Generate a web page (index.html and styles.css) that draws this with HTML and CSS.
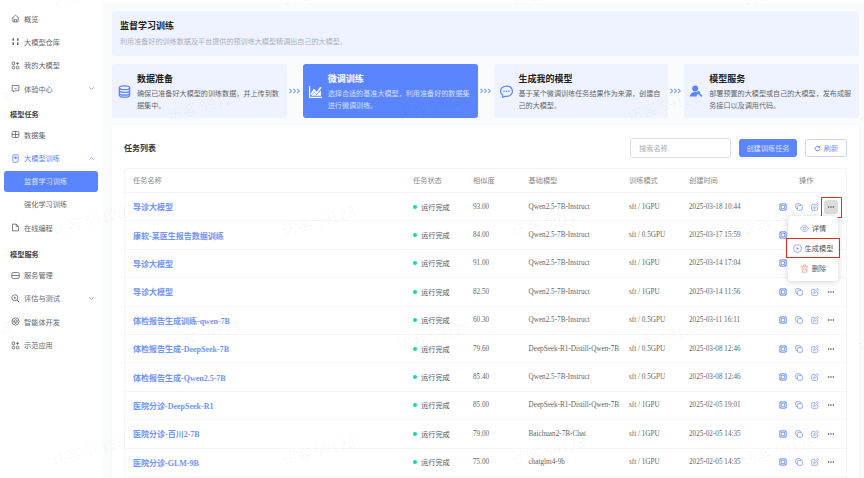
FILE: index.html
```html
<!DOCTYPE html>
<html lang="zh-CN">
<head>
    <meta charset="UTF-8">
    <meta name="viewport" content="width=device-width, initial-scale=1.0">
    <title>监督学习训练</title>
    <link rel="stylesheet" href="styles.css">
</head>
<body>
    <svg class="sprite" xmlns="http://www.w3.org/2000/svg">
        <symbol id="i-scan" viewBox="0 0 24 24">
            <rect x="2" y="2" width="20" height="20" rx="3" fill="currentColor" fill-opacity=".3" stroke="currentColor" stroke-width="2.4"/>
            <path d="M3 3l5 5M21 3l-5 5M3 21l5-5M21 21l-5-5" fill="none" stroke="currentColor" stroke-width="2.4"/>
            <rect x="7.500" y="7.500" width="9" height="9" fill="#fff" stroke="currentColor" stroke-width="2"/>
        </symbol>
        <symbol id="i-copy" viewBox="0 0 24 24">
            <rect x="2" y="2" width="15" height="15" rx="4" fill="none" stroke="currentColor" stroke-width="2.2"/>
            <rect x="7" y="7" width="15" height="15" rx="4" fill="#fff" stroke="currentColor" stroke-width="2.2"/>
        </symbol>
        <symbol id="i-edit" viewBox="0 0 24 24">
            <path d="M12 4H5a3 3 0 0 0-3 3v12a3 3 0 0 0 3 3h12a3 3 0 0 0 3-3v-7" fill="none" stroke="currentColor" stroke-width="2.2"/>
            <path d="M8 16l1-5L19 1.500l3.500 3.500L13 15z" fill="none" stroke="currentColor" stroke-width="2.2" stroke-linejoin="round"/>
        </symbol>
        <symbol id="i-dots" viewBox="0 0 24 24">
            <circle cx="5" cy="12" r="2.300" fill="currentColor"/>
            <circle cx="12" cy="12" r="2.300" fill="currentColor"/>
            <circle cx="19" cy="12" r="2.300" fill="currentColor"/>
        </symbol>
        <symbol id="i-chevrons" viewBox="0 0 30 14">
            <path d="M2 2l5 5-5 5M11 2l5 5-5 5M20 2l5 5-5 5" fill="none" stroke="currentColor" stroke-width="2.400"/>
        </symbol>
        <symbol id="i-down" viewBox="0 0 24 24">
            <path d="M5 8l7 7 7-7" fill="none" stroke="currentColor" stroke-width="2.500"/>
        </symbol>
        <symbol id="i-apps" viewBox="0 0 24 24">
            <rect x="3" y="3" width="7" height="7" rx="1.500" fill="none" stroke="currentColor" stroke-width="2.200"/>
            <circle cx="6.500" cy="17.500" r="3.500" fill="none" stroke="currentColor" stroke-width="2.200"/>
            <rect x="14" y="14" width="7" height="7" rx="1.500" fill="none" stroke="currentColor" stroke-width="2.200"/>
            <path d="M17.500 2.500v8M13.500 6.500h8" fill="none" stroke="currentColor" stroke-width="2.200"/>
        </symbol>
    </svg>

    <div class="app">
        <aside class="sidebar">
            <a class="nav-item">
                <svg class="nav-icon" viewBox="0 0 24 24"><path d="M3 11l9-8 9 8M5 10v11h14V10M9 21v-6h6v6" fill="none" stroke="currentColor" stroke-width="2.200"/></svg>
                概览
            </a>
            <a class="nav-item">
                <svg class="nav-icon" viewBox="0 0 24 24"><path d="M6 3v7M6 14v7M18 3v7M18 14v7" fill="none" stroke="currentColor" stroke-width="4"/></svg>
                大模型仓库
            </a>
            <a class="nav-item">
                <svg class="nav-icon"><use href="#i-apps"/></svg>
                我的大模型
            </a>
            <a class="nav-item">
                <svg class="nav-icon" viewBox="0 0 24 24"><path d="M3 4h18v14H10l-3 3v-3H3z" fill="none" stroke="currentColor" stroke-width="2.200" stroke-linejoin="round"/><path d="M8 10c1 3 7 3 8 0" fill="none" stroke="currentColor" stroke-width="2"/></svg>
                体验中心
                <svg class="nav-arrow"><use href="#i-down"/></svg>
            </a>

            <div class="nav-section">模型任务</div>
            <a class="nav-item">
                <svg class="nav-icon" viewBox="0 0 24 24"><rect x="3" y="4" width="18" height="16" rx="3" fill="none" stroke="currentColor" stroke-width="2.200"/><path d="M3 12h18M12 4v16" fill="none" stroke="currentColor" stroke-width="2.200"/></svg>
                数据集
            </a>
            <a class="nav-item nav-item-open">
                <svg class="nav-icon" viewBox="0 0 24 24"><rect x="5" y="2" width="14" height="20" rx="2" fill="none" stroke="currentColor" stroke-width="2.200"/><rect x="9" y="7" width="6" height="6" fill="currentColor"/></svg>
                大模型训练
                <svg class="nav-arrow nav-arrow-up"><use href="#i-down"/></svg>
            </a>
            <a class="nav-item nav-item-active">监督学习训练</a>
            <a class="nav-item nav-item-sub">强化学习训练</a>
            <a class="nav-item">
                <svg class="nav-icon" viewBox="0 0 24 24"><path d="M4 3h10l6 6v12H4zM14 3v6h6" fill="none" stroke="currentColor" stroke-width="2.200" stroke-linejoin="round"/></svg>
                在线编程
            </a>

            <div class="nav-section nav-section-low">模型服务</div>
            <a class="nav-item">
                <svg class="nav-icon" viewBox="0 0 24 24"><rect x="2" y="4" width="20" height="16" rx="4" fill="none" stroke="currentColor" stroke-width="2.200"/><path d="M2 12h20" fill="none" stroke="currentColor" stroke-width="2.200"/></svg>
                服务管理
            </a>
            <a class="nav-item">
                <svg class="nav-icon" viewBox="0 0 24 24"><circle cx="10" cy="10" r="8" fill="none" stroke="currentColor" stroke-width="2.200"/><path d="M16 16l6 6" fill="none" stroke="currentColor" stroke-width="2.600"/><path d="M7 10h6M10 7v6" fill="none" stroke="currentColor" stroke-width="2"/></svg>
                评估与测试
                <svg class="nav-arrow"><use href="#i-down"/></svg>
            </a>
            <a class="nav-item">
                <svg class="nav-icon" viewBox="0 0 24 24"><circle cx="12" cy="12" r="9.500" fill="none" stroke="currentColor" stroke-width="2.200"/><path d="M12 7l5 3v4l-5 3-5-3v-4zM7 10l5 3 5-3M12 13v4" fill="none" stroke="currentColor" stroke-width="1.800"/></svg>
                智能体开发
            </a>
            <a class="nav-item">
                <svg class="nav-icon"><use href="#i-apps"/></svg>
                示范应用
            </a>
        </aside>

        <main class="main">
            <div class="banner">
                <h1>监督学习训练</h1>
                <p>利用准备好的训练数据及平台提供的预训练大模型精调出自己的大模型。</p>
            </div>

            <div class="steps">
                <div class="step">
                    <svg class="step-icon" viewBox="0 0 24 24"><ellipse cx="12" cy="5" rx="9.500" ry="3.500" fill="none" stroke="currentColor" stroke-width="2.400"/><path d="M2.500 5v14c0 2 4 3.500 9.500 3.500s9.500-1.500 9.500-3.500V5M2.500 10c0 2 4 3.500 9.500 3.500s9.500-1.500 9.500-3.500M2.500 15c0 2 4 3.500 9.500 3.500s9.500-1.500 9.500-3.500" fill="none" stroke="currentColor" stroke-width="2.400"/></svg>
                    <div>
                        <h3>数据准备</h3>
                        <p>确保已准备好大模型的训练数据，并上传到数据集中。</p>
                    </div>
                </div>
                <svg class="step-arrow"><use href="#i-chevrons"/></svg>
                <div class="step step-active">
                    <svg class="step-icon" viewBox="0 0 24 24"><path d="M1 2v21h23" fill="none" stroke="currentColor" stroke-width="2.600"/><path d="M4 18l5-9 5 6 8-11" fill="none" stroke="currentColor" stroke-width="3"/><path d="M5 20l4-7 5 6 8-9v10z" fill="currentColor"/></svg>
                    <div>
                        <h3>微调训练</h3>
                        <p>选择合适的基准大模型，利用准备好的数据集进行微调训练。</p>
                    </div>
                </div>
                <svg class="step-arrow"><use href="#i-chevrons"/></svg>
                <div class="step">
                    <svg class="step-icon" viewBox="0 0 24 24"><path d="M12 2c6 0 11 4 11 9.500S18 21 12 21c-1 0-1.500 0-2.500-.2L5 23v-4.500c-2.500-1.800-4-4-4-7C1 6 6 2 12 2z" fill="none" stroke="currentColor" stroke-width="2.200" stroke-linejoin="round"/><circle cx="7.500" cy="11.500" r="1.500" fill="currentColor"/><circle cx="12" cy="11.500" r="1.500" fill="currentColor"/><circle cx="16.500" cy="11.500" r="1.500" fill="currentColor"/></svg>
                    <div>
                        <h3>生成我的模型</h3>
                        <p>基于某个微调训练任务结果作为来源，创建自己的大模型。</p>
                    </div>
                </div>
                <svg class="step-arrow"><use href="#i-chevrons"/></svg>
                <div class="step">
                    <svg class="step-icon" viewBox="0 0 24 24"><circle cx="9.500" cy="6.500" r="5.500" fill="currentColor"/><path d="M0 21c0-5 4-8 9.500-8 2 0 3.500.4 5 1.200L12 21z" fill="currentColor"/><path d="M15 14l7 7" fill="none" stroke="currentColor" stroke-width="3"/><circle cx="15.500" cy="14" r="3" fill="currentColor"/></svg>
                    <div>
                        <h3>模型服务</h3>
                        <p>部署预置的大模型或自己的大模型，发布成服务接口以及调用代码。</p>
                    </div>
                </div>
            </div>

            <section class="panel">
                <div class="panel-head">
                    <h2>任务列表</h2>
                    <div class="toolbar">
                        <input class="search" type="text" placeholder="搜索名称">
                        <button class="btn btn-primary">创建训练任务</button>
                        <button class="btn btn-ghost">
                            <svg class="btn-icon" viewBox="0 0 24 24"><path d="M20 12a8 8 0 1 1-2.500-5.800" fill="none" stroke="currentColor" stroke-width="3"/><path d="M21 2v7h-7z" fill="currentColor"/></svg>
                            刷新
                        </button>
                    </div>
                </div>

                <div class="table-wrap">
                    <table>
                        <colgroup>
                            <col class="col-name"><col class="col-status"><col class="col-score"><col class="col-model"><col class="col-mode"><col class="col-time"><col class="col-ops">
                        </colgroup>
                        <thead>
                            <tr>
                                <th>任务名称</th>
                                <th>任务状态</th>
                                <th>相似度</th>
                                <th>基础模型</th>
                                <th>训练模式</th>
                                <th>创建时间</th>
                                <th class="th-ops">操作</th>
                            </tr>
                        </thead>
                        <tbody>
                            <tr>
                                <td><a class="task-name">导诊大模型</a></td>
                                <td><span class="status">运行完成</span></td>
                                <td>93.00</td>
                                <td>Qwen2.5-7B-Instruct</td>
                                <td>sft / 1GPU</td>
                                <td>2025-03-18 10:44</td>
                                <td>
                                    <div class="ops">
                                        <svg class="op"><use href="#i-scan"/></svg>
                                        <svg class="op"><use href="#i-copy"/></svg>
                                        <svg class="op"><use href="#i-edit"/></svg>
                                        <span class="more more-open"><svg class="op-more"><use href="#i-dots"/></svg></span>
                                        <div class="menu">
                                            <div class="menu-item">
                                                <svg class="menu-icon" viewBox="0 0 24 24"><path d="M1 12c3-5 7-8 11-8s8 3 11 8c-3 5-7 8-11 8s-8-3-11-8z" fill="none" stroke="currentColor" stroke-width="2"/><circle cx="12" cy="12" r="3.500" fill="none" stroke="currentColor" stroke-width="2"/></svg>
                                                详情
                                            </div>
                                            <div class="menu-item menu-item-mark">
                                                <svg class="menu-icon" viewBox="0 0 24 24"><circle cx="12" cy="12" r="10.500" fill="none" stroke="currentColor" stroke-width="2"/><path d="M9.500 8l7 4-7 4z" fill="currentColor"/></svg>
                                                生成模型
                                            </div>
                                            <div class="menu-item menu-item-danger">
                                                <svg class="menu-icon" viewBox="0 0 24 24"><path d="M3 6h18M9 6V2.500h6V6M5 6l1.500 16h11L19 6M10 11v6M14 11v6" fill="none" stroke="currentColor" stroke-width="2.200"/></svg>
                                                删除
                                            </div>
                                        </div>
                                    </div>
                                </td>
                            </tr>
                            <tr>
                                <td><a class="task-name">康软-某医生报告数据训练</a></td>
                                <td><span class="status">运行完成</span></td>
                                <td>84.00</td>
                                <td>Qwen2.5-7B-Instruct</td>
                                <td>sft / 0.5GPU</td>
                                <td>2025-03-17 15:59</td>
                                <td>
                                    <div class="ops">
                                        <svg class="op"><use href="#i-scan"/></svg>
                                        <svg class="op"><use href="#i-copy"/></svg>
                                        <svg class="op"><use href="#i-edit"/></svg>
                                        <span class="more"><svg class="op-more"><use href="#i-dots"/></svg></span>
                                    </div>
                                </td>
                            </tr>
                            <tr>
                                <td><a class="task-name">导诊大模型</a></td>
                                <td><span class="status">运行完成</span></td>
                                <td>91.00</td>
                                <td>Qwen2.5-7B-Instruct</td>
                                <td>sft / 1GPU</td>
                                <td>2025-03-14 17:04</td>
                                <td>
                                    <div class="ops">
                                        <svg class="op"><use href="#i-scan"/></svg>
                                        <svg class="op"><use href="#i-copy"/></svg>
                                        <svg class="op"><use href="#i-edit"/></svg>
                                        <span class="more"><svg class="op-more"><use href="#i-dots"/></svg></span>
                                    </div>
                                </td>
                            </tr>
                            <tr>
                                <td><a class="task-name">导诊大模型</a></td>
                                <td><span class="status">运行完成</span></td>
                                <td>82.50</td>
                                <td>Qwen2.5-7B-Instruct</td>
                                <td>sft / 1GPU</td>
                                <td>2025-03-14 11:56</td>
                                <td>
                                    <div class="ops">
                                        <svg class="op"><use href="#i-scan"/></svg>
                                        <svg class="op"><use href="#i-copy"/></svg>
                                        <svg class="op"><use href="#i-edit"/></svg>
                                        <span class="more"><svg class="op-more"><use href="#i-dots"/></svg></span>
                                    </div>
                                </td>
                            </tr>
                            <tr>
                                <td><a class="task-name">体检报告生成训练-qwen-7B</a></td>
                                <td><span class="status">运行完成</span></td>
                                <td>60.30</td>
                                <td>Qwen2.5-7B-Instruct</td>
                                <td>sft / 0.5GPU</td>
                                <td>2025-03-11 16:11</td>
                                <td>
                                    <div class="ops">
                                        <svg class="op"><use href="#i-scan"/></svg>
                                        <svg class="op"><use href="#i-copy"/></svg>
                                        <svg class="op"><use href="#i-edit"/></svg>
                                        <span class="more"><svg class="op-more"><use href="#i-dots"/></svg></span>
                                    </div>
                                </td>
                            </tr>
                            <tr>
                                <td><a class="task-name">体检报告生成-DeepSeek-7B</a></td>
                                <td><span class="status">运行完成</span></td>
                                <td>79.60</td>
                                <td>DeepSeek-R1-Distill-Qwen-7B</td>
                                <td>sft / 0.5GPU</td>
                                <td>2025-03-08 12:46</td>
                                <td>
                                    <div class="ops">
                                        <svg class="op"><use href="#i-scan"/></svg>
                                        <svg class="op"><use href="#i-copy"/></svg>
                                        <svg class="op"><use href="#i-edit"/></svg>
                                        <span class="more"><svg class="op-more"><use href="#i-dots"/></svg></span>
                                    </div>
                                </td>
                            </tr>
                            <tr>
                                <td><a class="task-name">体检报告生成-Qwen2.5-7B</a></td>
                                <td><span class="status">运行完成</span></td>
                                <td>85.40</td>
                                <td>Qwen2.5-7B-Instruct</td>
                                <td>sft / 0.5GPU</td>
                                <td>2025-03-08 12:46</td>
                                <td>
                                    <div class="ops">
                                        <svg class="op"><use href="#i-scan"/></svg>
                                        <svg class="op"><use href="#i-copy"/></svg>
                                        <svg class="op"><use href="#i-edit"/></svg>
                                        <span class="more"><svg class="op-more"><use href="#i-dots"/></svg></span>
                                    </div>
                                </td>
                            </tr>
                            <tr>
                                <td><a class="task-name">医院分诊-DeepSeek-R1</a></td>
                                <td><span class="status">运行完成</span></td>
                                <td>85.00</td>
                                <td>DeepSeek-R1-Distill-Qwen-7B</td>
                                <td>sft / 1GPU</td>
                                <td>2025-02-05 19:01</td>
                                <td>
                                    <div class="ops">
                                        <svg class="op"><use href="#i-scan"/></svg>
                                        <svg class="op"><use href="#i-copy"/></svg>
                                        <svg class="op"><use href="#i-edit"/></svg>
                                        <span class="more"><svg class="op-more"><use href="#i-dots"/></svg></span>
                                    </div>
                                </td>
                            </tr>
                            <tr>
                                <td><a class="task-name">医院分诊-百川2-7B</a></td>
                                <td><span class="status">运行完成</span></td>
                                <td>79.00</td>
                                <td>Baichuan2-7B-Chat</td>
                                <td>sft / 1GPU</td>
                                <td>2025-02-05 14:35</td>
                                <td>
                                    <div class="ops">
                                        <svg class="op"><use href="#i-scan"/></svg>
                                        <svg class="op"><use href="#i-copy"/></svg>
                                        <svg class="op"><use href="#i-edit"/></svg>
                                        <span class="more"><svg class="op-more"><use href="#i-dots"/></svg></span>
                                    </div>
                                </td>
                            </tr>
                            <tr>
                                <td><a class="task-name">医院分诊-GLM-9B</a></td>
                                <td><span class="status">运行完成</span></td>
                                <td>75.00</td>
                                <td>chatglm4-9b</td>
                                <td>sft / 1GPU</td>
                                <td>2025-02-05 14:35</td>
                                <td>
                                    <div class="ops">
                                        <svg class="op"><use href="#i-scan"/></svg>
                                        <svg class="op"><use href="#i-copy"/></svg>
                                        <svg class="op"><use href="#i-edit"/></svg>
                                        <span class="more"><svg class="op-more"><use href="#i-dots"/></svg></span>
                                    </div>
                                </td>
                            </tr>
                        </tbody>
                    </table>
                </div>
            </section>
        </main>
    </div>

    <!-- 水印 -->
    <div class="watermark">
        <div class="wm-row wm-row-even"><span>访客 59128</span><span>访客 59128</span><span>访客 59128</span><span>访客 59128</span></div>
        <div class="wm-row"><span>访客 59128</span><span>访客 59128</span><span>访客 59128</span><span>访客 59128</span><span>访客 59128</span></div>
        <div class="wm-row wm-row-even"><span>访客 59128</span><span>访客 59128</span><span>访客 59128</span><span>访客 59128</span></div>
        <div class="wm-row"><span>访客 59128</span><span>访客 59128</span><span>访客 59128</span><span>访客 59128</span><span>访客 59128</span></div>
        <div class="wm-row wm-row-even"><span>访客 59128</span><span>访客 59128</span><span>访客 59128</span><span>访客 59128</span></div>
    </div>
</body>
</html>
```

FILE: styles.css
```css
:root {
    --primary: #5b84ff;
    --primary-soft: #eef3ff;
    --text: #555;
    --line: #f5f6f8;
    --font: "Liberation Serif", "Noto Sans CJK SC", serif;
    --font-cjk: "Noto Sans CJK SC", "Liberation Sans", sans-serif;
}

* {
    box-sizing: border-box;
    margin: 0;
    padding: 0;
}

html, body {
    width: 864px;
    height: 478px;
    overflow: hidden;
}

body {
    font-family: var(--font-cjk);
    font-size: 7.2px;
    color: var(--text);
    background-color: #fafbfc;
    position: relative;
}

.sprite {
    display: none;
}

.app {
    display: flex;
    height: 478px;
}

/* 左侧菜单 */
.sidebar {
    width: 103px;
    flex-shrink: 0;
    background-color: #fff;
    padding-top: 7px;
}

.nav-item {
    display: flex;
    align-items: center;
    height: 23.3px;
    padding-left: 11px;
    font-size: 7.2px;
    color: #666;
}

.nav-icon {
    width: 9px;
    height: 9px;
    margin-right: 4px;
    flex-shrink: 0;
}

.nav-arrow {
    width: 7px;
    height: 7px;
    margin-left: auto;
    margin-right: 8px;
    color: #888;
}

.nav-arrow-up {
    transform: rotate(180deg);
    color: var(--primary);
}

.nav-section {
    height: 19px;
    margin-top: 4px;
    padding-left: 10px;
    line-height: 20px;
    font-size: 7.2px;
    font-weight: 700;
    color: #444;
}

.nav-section-low {
    margin-top: 4.6px;
    height: 19.5px;
}

.nav-item-open {
    color: var(--primary);
}

.nav-item-active {
    height: 21px;
    margin: 1px 5px 1px 4px;
    padding-left: 20px;
    border-radius: 3px;
    background-color: var(--primary);
    color: #dfe7ff;
}

.nav-item-sub {
    padding-left: 24px;
}

/* 内容区 */
.main {
    flex: 1;
    min-width: 0;
    padding: 11px 5px 0 9px;
    border-top: 3px solid #fff;
    display: flex;
    flex-direction: column;
}

.banner {
    height: 45px;
    margin-top: -3px;
    padding: 8px 8px 0;
    background-color: var(--primary-soft);
    border-radius: 3px;
}

.banner h1 {
    font-size: 9px;
    line-height: 13px;
    font-weight: 700;
    color: #222;
}

.banner p {
    margin-top: 4px;
    font-size: 7.1px;
    line-height: 11px;
    color: #aab0bd;
}

.steps {
    display: flex;
    align-items: center;
    height: 54px;
    margin-top: 8px;
}

.step {
    flex: 1;
    display: flex;
    align-items: center;
    height: 54px;
    padding: 0 4px 0 6px;
    background-color: var(--primary-soft);
    border-radius: 3px;
}

.step h3 {
    font-size: 9px;
    line-height: 13px;
    font-weight: 700;
    color: #222;
    margin-bottom: 2px;
}

.step p {
    font-size: 7.1px;
    line-height: 12px;
    color: #666;
}

.step-icon {
    width: 13px;
    height: 13px;
    margin-right: 6px;
    flex-shrink: 0;
    color: var(--primary);
}

.step-active {
    background-color: var(--primary);
}

.step-active h3 {
    color: #fff;
}

.step-active p {
    color: #d5e0ff;
}

.step-active .step-icon {
    color: #fff;
}

.step-arrow {
    width: 16px;
    height: 6px;
    flex-shrink: 0;
    color: #7095ff;
}

.panel {
    flex: 1;
    margin-top: 7px;
    padding: 0 12px;
    background-color: #fff;
    border-radius: 3px 3px 0 0;
    box-shadow: 0 0 3px rgba(0, 0, 0, 0.04);
}

.panel-head {
    display: flex;
    align-items: center;
    justify-content: space-between;
    height: 43px;
    padding-top: 3px;
}

.panel-head h2 {
    margin-bottom: 2px;
    font-size: 8px;
    font-weight: 700;
    color: #333;
}

.toolbar {
    display: flex;
    align-items: center;
    gap: 8px;
}

.search {
    width: 101px;
    height: 20px;
    padding: 0 8px;
    border: 1px solid #dedfe3;
    border-radius: 3px;
    font-family: var(--font-cjk);
    font-size: 7.2px;
    outline: none;
}

.search::placeholder {
    color: #aaa;
}

.btn {
    display: flex;
    align-items: center;
    justify-content: center;
    height: 18px;
    border-radius: 3px;
    font-family: var(--font-cjk);
    font-size: 7.2px;
}

.btn-primary {
    width: 58px;
    border: none;
    background-color: var(--primary);
    color: #dfe7ff;
}

.btn-ghost {
    width: 42px;
    border: 1px solid #c9d6ff;
    background-color: #fff;
    color: #7095ff;
}

.btn-icon {
    width: 7px;
    height: 7px;
    margin-right: 3px;
    color: var(--primary);
}

/* 任务表格 */
.table-wrap {
    border: 1px solid var(--line);
    border-bottom: none;
    border-radius: 3px 3px 0 0;
}

table {
    width: 100%;
    table-layout: fixed;
    border-collapse: separate;
    border-spacing: 0;
    font-family: var(--font);
    font-size: 7.2px;
}

.col-name { width: 279px; }
.col-status { width: 60px; }
.col-score { width: 55.5px; }
.col-model { width: 100.5px; }
.col-mode { width: 60px; }
.col-time { width: 90px; }
.col-ops { width: 76px; }

th, td {
    padding-left: 9px;
    text-align: left;
    white-space: nowrap;
    border-bottom: 1px solid var(--line);
}

th:first-child, td:first-child {
    padding-left: 8px;
}

th {
    height: 24px;
    padding-bottom: 2px;
    font-weight: 400;
    color: #888;
}

.th-ops {
    padding-left: 29px;
}

td {
    height: 28.4px;
    color: #666;
}

.task-name {
    font-size: 8px;
    font-weight: 700;
    color: #6f93ff;
}

.status {
    display: flex;
    align-items: center;
    color: #555;
}

.status::before {
    content: "";
    width: 4px;
    height: 4px;
    margin-right: 4px;
    border-radius: 50%;
    background-color: #12d8b0;
}

.ops {
    position: relative;
    display: flex;
    align-items: center;
    gap: 8px;
}

.op {
    width: 8px;
    height: 8px;
    color: #6f93ff;
}

.more {
    display: flex;
    align-items: center;
    justify-content: center;
    width: 8px;
    height: 8px;
}

.op-more {
    width: 8px;
    height: 8px;
    flex-shrink: 0;
    color: #444;
}

.more-open {
    position: relative;
}

/* 展开的按钮：灰底 + 红框 */
.more-open::before {
    content: "";
    position: absolute;
    left: -3px;
    top: -3px;
    width: 14px;
    height: 14px;
    border-radius: 3px;
    background-color: #ddd;
}

.more-open::after {
    content: "";
    position: absolute;
    left: -6px;
    top: -6px;
    width: 19px;
    height: 19px;
    border: 1.5px solid #d8322c;
}

.more-open .op-more {
    position: relative;
    z-index: 1;
}

.menu {
    position: absolute;
    left: 9px;
    top: 13px;
    z-index: 5;
    width: 50px;
    height: 65px;
    padding-top: 2.5px;
    background-color: #fff;
    border-radius: 3px;
    box-shadow: 0 1px 6px rgba(0, 0, 0, 0.18);
    font-family: var(--font-cjk);
}

.menu-item {
    display: flex;
    align-items: center;
    justify-content: center;
    height: 20px;
    color: #555;
}

.menu-icon {
    width: 9px;
    height: 9px;
    margin-right: 3px;
    color: #7095ff;
}

.menu-item-mark {
    position: relative;
    margin: 0 -2px;
    border: 1.5px solid #d8322c;
}

.menu-item-danger .menu-icon {
    color: #f5a08f;
}

/* 水印 */
.watermark {
    position: absolute;
    inset: 0;
    z-index: 10;
    overflow: hidden;
    pointer-events: none;
}

.wm-row {
    display: flex;
    gap: 155px;
    height: 115px;
    margin-left: -52px;
    font-size: 15px;
    color: rgba(0, 0, 0, 0.035);
    white-space: nowrap;
}

.wm-row:first-child {
    margin-top: -22px;
}

.wm-row-even {
    margin-left: 63px;
}

.wm-row span {
    width: 75px;
    flex-shrink: 0;
    transform: rotate(-15deg);
}
```
